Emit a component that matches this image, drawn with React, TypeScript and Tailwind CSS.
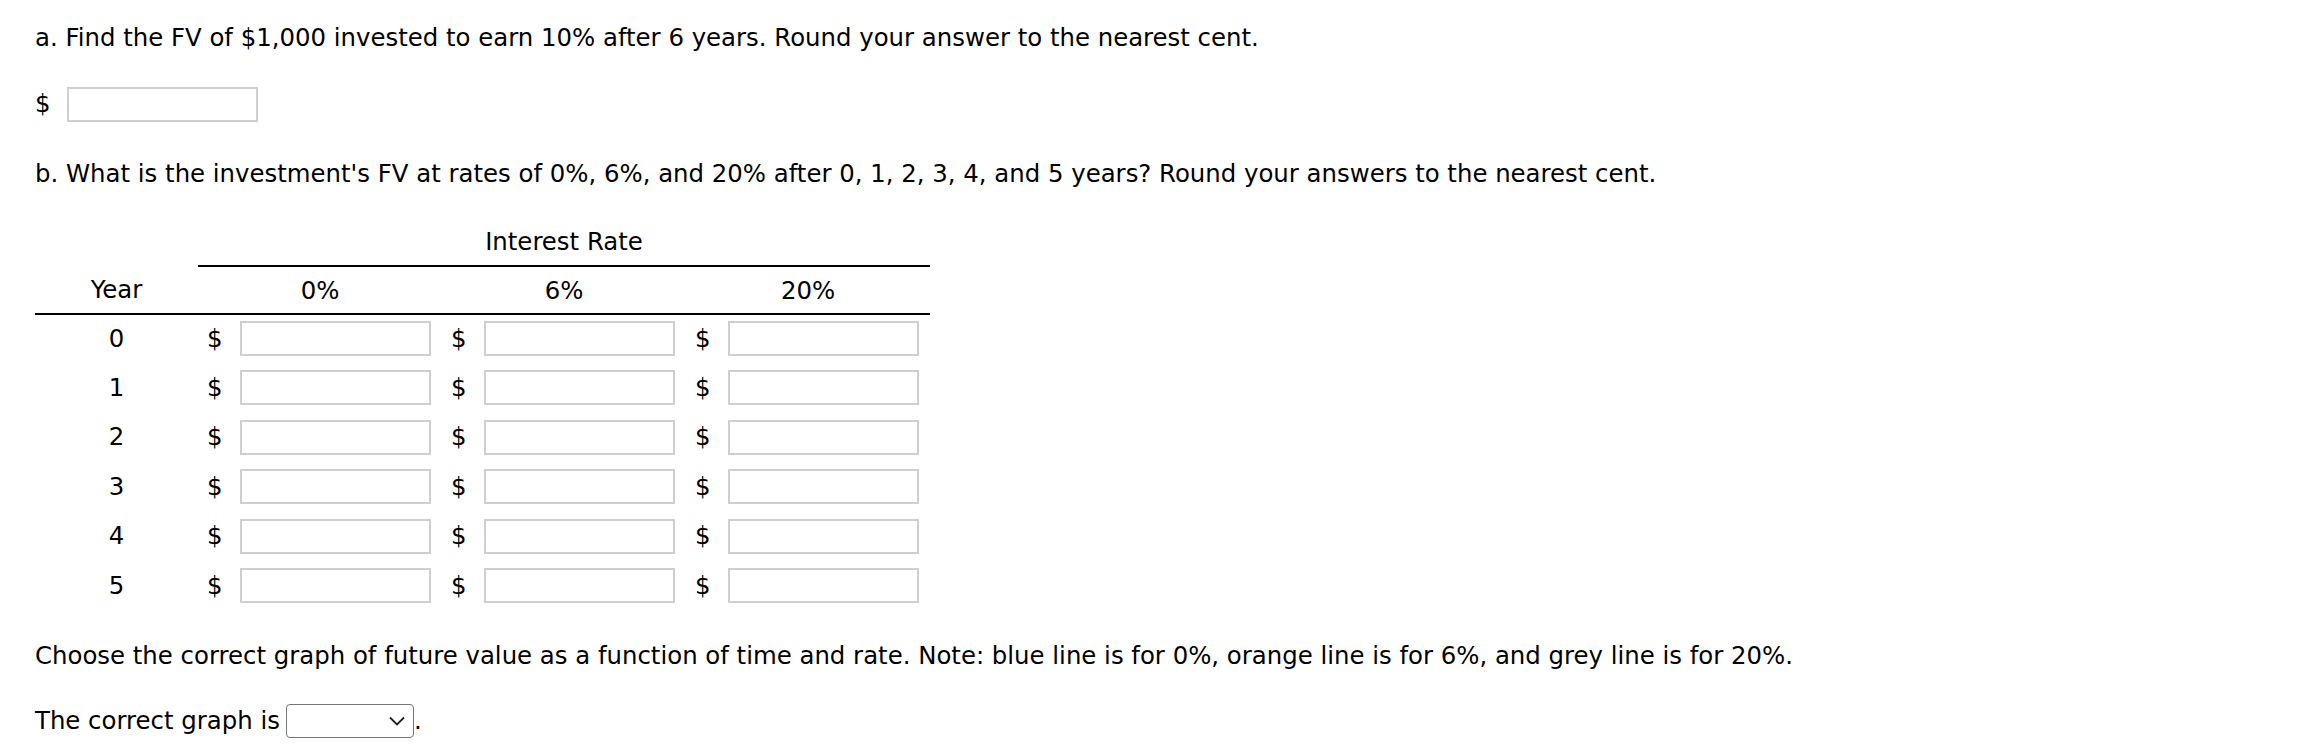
import React from "react";

const years = [0, 1, 2, 3, 4, 5];
const rates = ["0%", "6%", "20%"];

function MoneyInput() {
  return (
    <div className="flex h-[35px] items-center pl-[9px] pr-[11px]">
      <span className="w-[33px] shrink-0">$</span>
      <div className="h-[35px] w-[191px] border-2 border-[#cfcfcf] bg-white" />
    </div>
  );
}

export default function App() {
  return (
    <main className="h-[754px] w-[2298px] bg-white pl-[35px] pt-[20px] font-['DejaVu_Sans',sans-serif] text-[24.4px] leading-[36px] text-black">
      <p>a. Find the FV of $1,000 invested to earn 10% after 6 years. Round your answer to the nearest cent.</p>

      <div className="mt-[30px] flex items-center">
        <span className="w-[32px]">$</span>
        <div className="h-[35px] w-[191px] border-2 border-[#cfcfcf]" />
      </div>

      <p className="mt-[34px]">
        b. What is the investment's FV at rates of 0%, 6%, and 20% after 0, 1, 2, 3, 4, and 5 years? Round your answers
        to the nearest cent.
      </p>

      <table className="mt-[32px] border-collapse">
        <thead>
          <tr>
            <th className="w-[163px] p-0" />
            <th colSpan={3} className="border-b-2 border-black p-0 pb-[5px] text-center font-normal">
              Interest Rate
            </th>
          </tr>
          <tr>
            <th className="border-b-2 border-black p-0 pt-[5.5px] pb-[4px] text-center font-normal">Year</th>
            {rates.map((r) => (
              <th key={r} className="w-[244px] border-b-2 border-black p-0 pt-[5.5px] pb-[4px] text-center font-normal">
                {r}
              </th>
            ))}
          </tr>
        </thead>
        <tbody>
          {years.map((y) => (
            <tr key={y} className="h-[49.5px]">
              <td className="p-0 text-center align-middle">{y}</td>
              {rates.map((r) => (
                <td key={r} className="p-0 align-middle">
                  <MoneyInput />
                </td>
              ))}
            </tr>
          ))}
        </tbody>
      </table>

      <p className="mt-[27px]">
        Choose the correct graph of future value as a function of time and rate. Note: blue line is for 0%, orange line
        is for 6%, and grey line is for 20%.
      </p>

      <div className="mt-[29px] flex items-center">
        <span>The correct graph is</span>
        <div className="ml-[6px] flex h-[34px] w-[128px] items-center justify-end rounded-[4px] border-[1.5px] border-[#767676] pr-[8px]">
          <svg width="16" height="10" viewBox="0 0 16 10" fill="none">
            <path d="M1 1.5 L8 8.5 L15 1.5" stroke="#222" strokeWidth="1.8" />
          </svg>
        </div>
        <span>.</span>
      </div>
    </main>
  );
}
